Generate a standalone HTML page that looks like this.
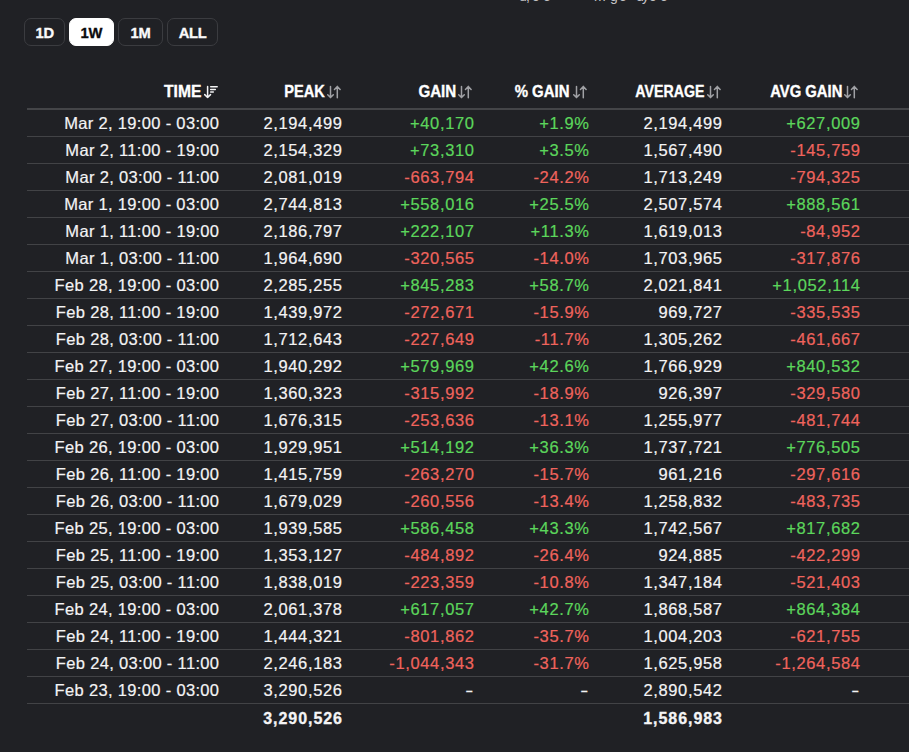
<!DOCTYPE html>
<html><head><meta charset="utf-8"><style>
html,body{margin:0;padding:0;background:#202125;width:909px;height:752px;overflow:hidden;}
body{position:relative;font-family:"Liberation Sans",sans-serif;color:#f4f4f5;}
.btn{position:absolute;top:18px;height:26px;border:1px solid #3b3c40;border-radius:7px;font-weight:bold;font-size:15.5px;line-height:27.5px;text-align:center;color:#fafafa;letter-spacing:-0.3px}
.bt{display:inline-block;transform:scaleX(0.95);-webkit-text-stroke:0.35px currentColor}
.btn.on{background:#ffffff;color:#0b0b0c;border-color:#fff}
.hl{position:absolute;left:27px;right:0;height:0;border-top:2px solid #444548;top:108px}
.rl{position:absolute;left:27px;right:0;height:1px;background:#424346}
.c{position:absolute;white-space:nowrap;font-size:16.5px;line-height:27px;height:27px;text-align:right;letter-spacing:0.65px;margin-right:-0.65px;-webkit-text-stroke:0.2px currentColor}
.t{letter-spacing:0.33px;margin-right:-0.33px}
.h{position:absolute;white-space:nowrap;font-size:16.5px;font-weight:bold;line-height:27px;height:27px;text-align:right;color:#fff;transform:scaleX(0.84);transform-origin:100% 50%;-webkit-text-stroke:0.35px #fff}
.ic{display:inline-block;vertical-align:0px;margin-left:3px}
.g{color:#5cd65c}.r{color:#f0645d}
.b{font-weight:bold;font-size:16px;letter-spacing:0.95px;margin-right:-0.95px;-webkit-text-stroke:0.3px #f4f4f5;top:1px}
.top{position:absolute;font-size:14px;line-height:14px;color:#c4c4c6;white-space:nowrap}
</style></head><body>

<div class="btn" style="left:24px;width:39px"><span class="bt">1D</span></div>
<div class="btn on" style="left:69px;width:43px"><span class="bt">1W</span></div>
<div class="btn" style="left:118px;width:43px"><span class="bt">1M</span></div>
<div class="btn" style="left:167px;width:49px"><span class="bt">ALL</span></div>
<div class="h" style="top:78px;right:708px;transform:scaleX(0.948)">TIME</div>
<svg style="position:absolute;left:204px;top:82px" width="15" height="18" viewBox="0 0 15 18"><path d="M3.6 4.6V15.5M0.7 12.6L3.6 15.5L6.5 12.6" stroke="#f4f4f5" stroke-width="1.5" fill="none" stroke-linecap="round" stroke-linejoin="round"/><path d="M6.7 4.7H13.2M6.7 7.4H11.3M6.7 10H9.3" stroke="#f4f4f5" stroke-width="1.5" fill="none" stroke-linecap="round"/></svg>
<div class="h" style="top:78px;right:584.5px;transform:scaleX(0.884)">PEAK</div>
<svg style="position:absolute;left:327px;top:82px" width="15" height="18" viewBox="0 0 15 18"><path d="M3.5 4.6V15.6M0.7 12.7L3.5 15.6L6.3 12.7M10.3 15.7V4.4M7.5 7.4L10.3 4.4L13.1 7.4" stroke="#a0a1a5" stroke-width="1.5" fill="none" stroke-linecap="round" stroke-linejoin="round"/></svg>
<div class="h" style="top:78px;right:453px;transform:scaleX(0.917)">GAIN</div>
<svg style="position:absolute;left:458px;top:82px" width="15" height="18" viewBox="0 0 15 18"><path d="M3.5 4.6V15.6M0.7 12.7L3.5 15.6L6.3 12.7M10.3 15.7V4.4M7.5 7.4L10.3 4.4L13.1 7.4" stroke="#a0a1a5" stroke-width="1.5" fill="none" stroke-linecap="round" stroke-linejoin="round"/></svg>
<div class="h" style="top:78px;right:339px;transform:scaleX(0.907)">% GAIN</div>
<svg style="position:absolute;left:573px;top:82px" width="15" height="18" viewBox="0 0 15 18"><path d="M3.5 4.6V15.6M0.7 12.7L3.5 15.6L6.3 12.7M10.3 15.7V4.4M7.5 7.4L10.3 4.4L13.1 7.4" stroke="#a0a1a5" stroke-width="1.5" fill="none" stroke-linecap="round" stroke-linejoin="round"/></svg>
<div class="h" style="top:78px;right:205px;transform:scaleX(0.859)">AVERAGE</div>
<svg style="position:absolute;left:707px;top:82px" width="15" height="18" viewBox="0 0 15 18"><path d="M3.5 4.6V15.6M0.7 12.7L3.5 15.6L6.3 12.7M10.3 15.7V4.4M7.5 7.4L10.3 4.4L13.1 7.4" stroke="#a0a1a5" stroke-width="1.5" fill="none" stroke-linecap="round" stroke-linejoin="round"/></svg>
<div class="h" style="top:78px;right:66.5px;transform:scaleX(0.898)">AVG GAIN</div>
<svg style="position:absolute;left:844px;top:82px" width="15" height="18" viewBox="0 0 15 18"><path d="M3.5 4.6V15.6M0.7 12.7L3.5 15.6L6.3 12.7M10.3 15.7V4.4M7.5 7.4L10.3 4.4L13.1 7.4" stroke="#a0a1a5" stroke-width="1.5" fill="none" stroke-linecap="round" stroke-linejoin="round"/></svg>
<div class="hl"></div>
<div class="c  t" style="top:110px;right:690px">Mar 2, 19:00 - 03:00</div>
<div class="c " style="top:110px;right:567px">2,194,499</div>
<div class="c g" style="top:110px;right:435px">+40,170</div>
<div class="c g" style="top:110px;right:320px">+1.9%</div>
<div class="c " style="top:110px;right:187px">2,194,499</div>
<div class="c g" style="top:110px;right:49px">+627,009</div>
<div class="rl" style="top:136px"></div>
<div class="c  t" style="top:137px;right:690px">Mar 2, 11:00 - 19:00</div>
<div class="c " style="top:137px;right:567px">2,154,329</div>
<div class="c g" style="top:137px;right:435px">+73,310</div>
<div class="c g" style="top:137px;right:320px">+3.5%</div>
<div class="c " style="top:137px;right:187px">1,567,490</div>
<div class="c r" style="top:137px;right:49px">-145,759</div>
<div class="rl" style="top:163px"></div>
<div class="c  t" style="top:164px;right:690px">Mar 2, 03:00 - 11:00</div>
<div class="c " style="top:164px;right:567px">2,081,019</div>
<div class="c r" style="top:164px;right:435px">-663,794</div>
<div class="c r" style="top:164px;right:320px">-24.2%</div>
<div class="c " style="top:164px;right:187px">1,713,249</div>
<div class="c r" style="top:164px;right:49px">-794,325</div>
<div class="rl" style="top:190px"></div>
<div class="c  t" style="top:191px;right:690px">Mar 1, 19:00 - 03:00</div>
<div class="c " style="top:191px;right:567px">2,744,813</div>
<div class="c g" style="top:191px;right:435px">+558,016</div>
<div class="c g" style="top:191px;right:320px">+25.5%</div>
<div class="c " style="top:191px;right:187px">2,507,574</div>
<div class="c g" style="top:191px;right:49px">+888,561</div>
<div class="rl" style="top:217px"></div>
<div class="c  t" style="top:218px;right:690px">Mar 1, 11:00 - 19:00</div>
<div class="c " style="top:218px;right:567px">2,186,797</div>
<div class="c g" style="top:218px;right:435px">+222,107</div>
<div class="c g" style="top:218px;right:320px">+11.3%</div>
<div class="c " style="top:218px;right:187px">1,619,013</div>
<div class="c r" style="top:218px;right:49px">-84,952</div>
<div class="rl" style="top:244px"></div>
<div class="c  t" style="top:245px;right:690px">Mar 1, 03:00 - 11:00</div>
<div class="c " style="top:245px;right:567px">1,964,690</div>
<div class="c r" style="top:245px;right:435px">-320,565</div>
<div class="c r" style="top:245px;right:320px">-14.0%</div>
<div class="c " style="top:245px;right:187px">1,703,965</div>
<div class="c r" style="top:245px;right:49px">-317,876</div>
<div class="rl" style="top:271px"></div>
<div class="c  t" style="top:272px;right:690px">Feb 28, 19:00 - 03:00</div>
<div class="c " style="top:272px;right:567px">2,285,255</div>
<div class="c g" style="top:272px;right:435px">+845,283</div>
<div class="c g" style="top:272px;right:320px">+58.7%</div>
<div class="c " style="top:272px;right:187px">2,021,841</div>
<div class="c g" style="top:272px;right:49px">+1,052,114</div>
<div class="rl" style="top:298px"></div>
<div class="c  t" style="top:299px;right:690px">Feb 28, 11:00 - 19:00</div>
<div class="c " style="top:299px;right:567px">1,439,972</div>
<div class="c r" style="top:299px;right:435px">-272,671</div>
<div class="c r" style="top:299px;right:320px">-15.9%</div>
<div class="c " style="top:299px;right:187px">969,727</div>
<div class="c r" style="top:299px;right:49px">-335,535</div>
<div class="rl" style="top:325px"></div>
<div class="c  t" style="top:326px;right:690px">Feb 28, 03:00 - 11:00</div>
<div class="c " style="top:326px;right:567px">1,712,643</div>
<div class="c r" style="top:326px;right:435px">-227,649</div>
<div class="c r" style="top:326px;right:320px">-11.7%</div>
<div class="c " style="top:326px;right:187px">1,305,262</div>
<div class="c r" style="top:326px;right:49px">-461,667</div>
<div class="rl" style="top:352px"></div>
<div class="c  t" style="top:353px;right:690px">Feb 27, 19:00 - 03:00</div>
<div class="c " style="top:353px;right:567px">1,940,292</div>
<div class="c g" style="top:353px;right:435px">+579,969</div>
<div class="c g" style="top:353px;right:320px">+42.6%</div>
<div class="c " style="top:353px;right:187px">1,766,929</div>
<div class="c g" style="top:353px;right:49px">+840,532</div>
<div class="rl" style="top:379px"></div>
<div class="c  t" style="top:380px;right:690px">Feb 27, 11:00 - 19:00</div>
<div class="c " style="top:380px;right:567px">1,360,323</div>
<div class="c r" style="top:380px;right:435px">-315,992</div>
<div class="c r" style="top:380px;right:320px">-18.9%</div>
<div class="c " style="top:380px;right:187px">926,397</div>
<div class="c r" style="top:380px;right:49px">-329,580</div>
<div class="rl" style="top:406px"></div>
<div class="c  t" style="top:407px;right:690px">Feb 27, 03:00 - 11:00</div>
<div class="c " style="top:407px;right:567px">1,676,315</div>
<div class="c r" style="top:407px;right:435px">-253,636</div>
<div class="c r" style="top:407px;right:320px">-13.1%</div>
<div class="c " style="top:407px;right:187px">1,255,977</div>
<div class="c r" style="top:407px;right:49px">-481,744</div>
<div class="rl" style="top:433px"></div>
<div class="c  t" style="top:434px;right:690px">Feb 26, 19:00 - 03:00</div>
<div class="c " style="top:434px;right:567px">1,929,951</div>
<div class="c g" style="top:434px;right:435px">+514,192</div>
<div class="c g" style="top:434px;right:320px">+36.3%</div>
<div class="c " style="top:434px;right:187px">1,737,721</div>
<div class="c g" style="top:434px;right:49px">+776,505</div>
<div class="rl" style="top:460px"></div>
<div class="c  t" style="top:461px;right:690px">Feb 26, 11:00 - 19:00</div>
<div class="c " style="top:461px;right:567px">1,415,759</div>
<div class="c r" style="top:461px;right:435px">-263,270</div>
<div class="c r" style="top:461px;right:320px">-15.7%</div>
<div class="c " style="top:461px;right:187px">961,216</div>
<div class="c r" style="top:461px;right:49px">-297,616</div>
<div class="rl" style="top:487px"></div>
<div class="c  t" style="top:488px;right:690px">Feb 26, 03:00 - 11:00</div>
<div class="c " style="top:488px;right:567px">1,679,029</div>
<div class="c r" style="top:488px;right:435px">-260,556</div>
<div class="c r" style="top:488px;right:320px">-13.4%</div>
<div class="c " style="top:488px;right:187px">1,258,832</div>
<div class="c r" style="top:488px;right:49px">-483,735</div>
<div class="rl" style="top:514px"></div>
<div class="c  t" style="top:515px;right:690px">Feb 25, 19:00 - 03:00</div>
<div class="c " style="top:515px;right:567px">1,939,585</div>
<div class="c g" style="top:515px;right:435px">+586,458</div>
<div class="c g" style="top:515px;right:320px">+43.3%</div>
<div class="c " style="top:515px;right:187px">1,742,567</div>
<div class="c g" style="top:515px;right:49px">+817,682</div>
<div class="rl" style="top:541px"></div>
<div class="c  t" style="top:542px;right:690px">Feb 25, 11:00 - 19:00</div>
<div class="c " style="top:542px;right:567px">1,353,127</div>
<div class="c r" style="top:542px;right:435px">-484,892</div>
<div class="c r" style="top:542px;right:320px">-26.4%</div>
<div class="c " style="top:542px;right:187px">924,885</div>
<div class="c r" style="top:542px;right:49px">-422,299</div>
<div class="rl" style="top:568px"></div>
<div class="c  t" style="top:569px;right:690px">Feb 25, 03:00 - 11:00</div>
<div class="c " style="top:569px;right:567px">1,838,019</div>
<div class="c r" style="top:569px;right:435px">-223,359</div>
<div class="c r" style="top:569px;right:320px">-10.8%</div>
<div class="c " style="top:569px;right:187px">1,347,184</div>
<div class="c r" style="top:569px;right:49px">-521,403</div>
<div class="rl" style="top:595px"></div>
<div class="c  t" style="top:596px;right:690px">Feb 24, 19:00 - 03:00</div>
<div class="c " style="top:596px;right:567px">2,061,378</div>
<div class="c g" style="top:596px;right:435px">+617,057</div>
<div class="c g" style="top:596px;right:320px">+42.7%</div>
<div class="c " style="top:596px;right:187px">1,868,587</div>
<div class="c g" style="top:596px;right:49px">+864,384</div>
<div class="rl" style="top:622px"></div>
<div class="c  t" style="top:623px;right:690px">Feb 24, 11:00 - 19:00</div>
<div class="c " style="top:623px;right:567px">1,444,321</div>
<div class="c r" style="top:623px;right:435px">-801,862</div>
<div class="c r" style="top:623px;right:320px">-35.7%</div>
<div class="c " style="top:623px;right:187px">1,004,203</div>
<div class="c r" style="top:623px;right:49px">-621,755</div>
<div class="rl" style="top:649px"></div>
<div class="c  t" style="top:650px;right:690px">Feb 24, 03:00 - 11:00</div>
<div class="c " style="top:650px;right:567px">2,246,183</div>
<div class="c r" style="top:650px;right:435px">-1,044,343</div>
<div class="c r" style="top:650px;right:320px">-31.7%</div>
<div class="c " style="top:650px;right:187px">1,625,958</div>
<div class="c r" style="top:650px;right:49px">-1,264,584</div>
<div class="rl" style="top:676px"></div>
<div class="c  t" style="top:677px;right:690px">Feb 23, 19:00 - 03:00</div>
<div class="c " style="top:677px;right:567px">3,290,526</div>
<div class="c " style="top:677px;right:435px"><span style="display:inline-block;transform:scaleX(1.45);transform-origin:100% 50%">-</span></div>
<div class="c " style="top:677px;right:320px"><span style="display:inline-block;transform:scaleX(1.45);transform-origin:100% 50%">-</span></div>
<div class="c " style="top:677px;right:187px">2,890,542</div>
<div class="c " style="top:677px;right:49px"><span style="display:inline-block;transform:scaleX(1.45);transform-origin:100% 50%">-</span></div>
<div class="rl" style="top:703px"></div>
<div class="c b" style="top:705px;right:567px">3,290,526</div>
<div class="c b" style="top:705px;right:187px">1,586,983</div>
<span class="top" style="left:519px;top:-11px">u</span>
<span class="top" style="left:526px;top:-11px">,</span>
<span class="top" style="left:532px;top:-11px">o</span>
<span class="top" style="left:543px;top:-11px">e</span>
<span class="top" style="left:594px;top:-11px">m</span>
<span class="top" style="left:610px;top:-11px">g</span>
<span class="top" style="left:619px;top:-11px">e</span>
<span class="top" style="left:636px;top:-11px">d</span>
<span class="top" style="left:642px;top:-11px">y</span>
<span class="top" style="left:649px;top:-11px">o</span>
<span class="top" style="left:660px;top:-11px">e</span>
</body></html>
